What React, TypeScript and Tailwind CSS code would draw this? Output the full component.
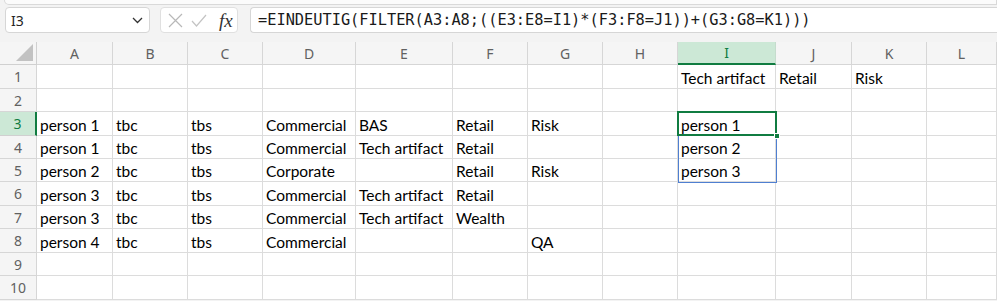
import React from "react";

const cols = ["A", "B", "C", "D", "E", "F", "G", "H", "I", "J", "K", "L"];
const widths = [76, 75, 75, 93, 97, 75, 75, 75, 98, 76, 75, 70];
const heights = [24, 23, 24, 23, 23, 24, 23, 24, 23, 24];

const data: Record<number, string[]> = {
  1: ["", "", "", "", "", "", "", "", "Tech artifact", "Retail", "Risk", ""],
  3: ["person 1", "tbc", "tbs", "Commercial", "BAS", "Retail", "Risk", "", "person 1", "", "", ""],
  4: ["person 1", "tbc", "tbs", "Commercial", "Tech artifact", "Retail", "", "", "person 2", "", "", ""],
  5: ["person 2", "tbc", "tbs", "Corporate", "", "Retail", "Risk", "", "person 3", "", "", ""],
  6: ["person 3", "tbc", "tbs", "Commercial", "Tech artifact", "Retail", "", "", "", "", "", ""],
  7: ["person 3", "tbc", "tbs", "Commercial", "Tech artifact", "Wealth", "", "", "", "", "", ""],
  8: ["person 4", "tbc", "tbs", "Commercial", "", "", "QA", "", "", "", "", ""],
};

const cellFont = { fontFamily: "Lato, 'Noto Sans', sans-serif" };
const uiFont = { fontFamily: "'Noto Sans', 'Open Sans', sans-serif" };

export default function App() {
  return (
    <div className="w-[997px] h-[301px] overflow-hidden bg-[#f3f3f3] relative">
      {/* ribbon edge */}
      <div className="h-[5px] ml-[4px] bg-[#fbfbfb] border border-t-0 border-[#d9d9d9] rounded-bl-[6px]" />
      {/* formula bar */}
      <div className="flex items-center h-[26px] mt-[2px] pl-[5px]">
        <div
          className="w-[145px] h-[26px] bg-white border border-[#d6d6d6] rounded-[4px] flex items-center justify-between pl-[5px] pr-[6px] text-[14px] text-[#242424]"
          style={uiFont}
        >
          <span>I3</span>
          <svg width="11" height="7" viewBox="0 0 11 7">
            <path d="M1 1 L5.5 5.5 L10 1" fill="none" stroke="#333" strokeWidth="1.3" />
          </svg>
        </div>
        <div className="ml-[10px] w-[78px] h-[26px] bg-white border border-[#e0e0e0] rounded-[4px] flex items-center pl-[7px] pr-[4px]">
          <svg width="15" height="15" viewBox="0 0 15 15">
            <path d="M1 1 L14 14 M14 1 L1 14" stroke="#b8b8b8" strokeWidth="1.2" />
          </svg>
          <svg className="ml-[8px]" width="16" height="13" viewBox="0 0 16 13">
            <path d="M1 7 L5.5 12 L15 1" fill="none" stroke="#c4c4c4" strokeWidth="1.2" />
          </svg>
          <span
            className="ml-[12px] text-[19px] italic leading-none text-[#333]"
            style={{ fontFamily: "'Liberation Serif', serif" }}
          >
            fx
          </span>
        </div>
        <div
          className="ml-[12px] flex-1 h-[26px] bg-white border border-r-0 border-[#d6d6d6] rounded-l-[4px] flex items-center pl-[7px] text-[15.3px] text-[#1a1a1a]"
          style={{ fontFamily: "'DejaVu Sans Mono', monospace" }}
        >
          =EINDEUTIG(FILTER(A3:A8;((E3:E8=I1)*(F3:F8=J1))+(G3:G8=K1)))
        </div>
      </div>

      {/* grid */}
      <div className="relative mt-[9px]">
        {/* header row */}
        <div className="flex h-[23px]">
          <div className="w-[37px] shrink-0 bg-[#f5f5f5] border-r border-b border-[#d0d0d0] relative">
            <svg className="absolute right-[3px] bottom-[3px]" width="17" height="17" viewBox="0 0 17 17">
              <path d="M17 0 L17 17 L0 17 Z" fill="#c2c2c2" />
            </svg>
          </div>
          {cols.map((c, i) => {
            const sel = c === "I";
            return (
              <div
                key={c}
                style={{ width: widths[i], ...uiFont }}
                className={
                  sel
                    ? "shrink-0 bg-[#cce8d6] border-r border-[#c5dccd] border-b-2 border-b-[#107c41] flex items-center justify-center text-[14px] text-[#107c41]"
                    : "shrink-0 bg-[#f5f5f5] border-r border-b border-[#d6d6d6] flex items-center justify-center text-[14px] text-[#616161]"
                }
              >
                {c}
              </div>
            );
          })}
        </div>
        {heights.map((h, r) => {
          const row = r + 1;
          const vals = data[row] || [];
          const sel = row === 3;
          return (
            <div key={row} className="flex" style={{ height: h }}>
              <div
                style={uiFont}
                className={
                  sel
                    ? "w-[37px] shrink-0 bg-[#cce8d6] border-r-2 border-r-[#107c41] border-b border-[#d0d0d0] flex items-center justify-center text-[14px] text-[#107c41]"
                    : "w-[37px] shrink-0 bg-[#f5f5f5] border-r border-b border-[#d6d6d6] flex items-center justify-center text-[14px] text-[#616161]"
                }
              >
                {row}
              </div>
              {cols.map((c, i) => (
                <div
                  key={c}
                  style={{ width: widths[i], ...cellFont }}
                  className="shrink-0 bg-white border-r border-b border-[#dcdcdc] flex items-end pl-[3px] pb-[1px] text-[15.5px] leading-[18px] text-black whitespace-nowrap overflow-hidden"
                >
                  {vals[i] || ""}
                </div>
              ))}
            </div>
          );
        })}

        {/* spill range border I3:I5 */}
        <div className="absolute left-[678px] top-[70px] w-[99px] h-[71px] border border-[#4f7fd1] pointer-events-none" />
        {/* active cell I3 */}
        <div className="absolute left-[677px] top-[69px] w-[100px] h-[25px] border-2 border-[#107c41] pointer-events-none" />
        {/* fill handle */}
        <div className="absolute left-[774px] top-[91px] w-[6px] h-[6px] bg-[#107c41] border border-white pointer-events-none" />
      </div>
    </div>
  );
}
